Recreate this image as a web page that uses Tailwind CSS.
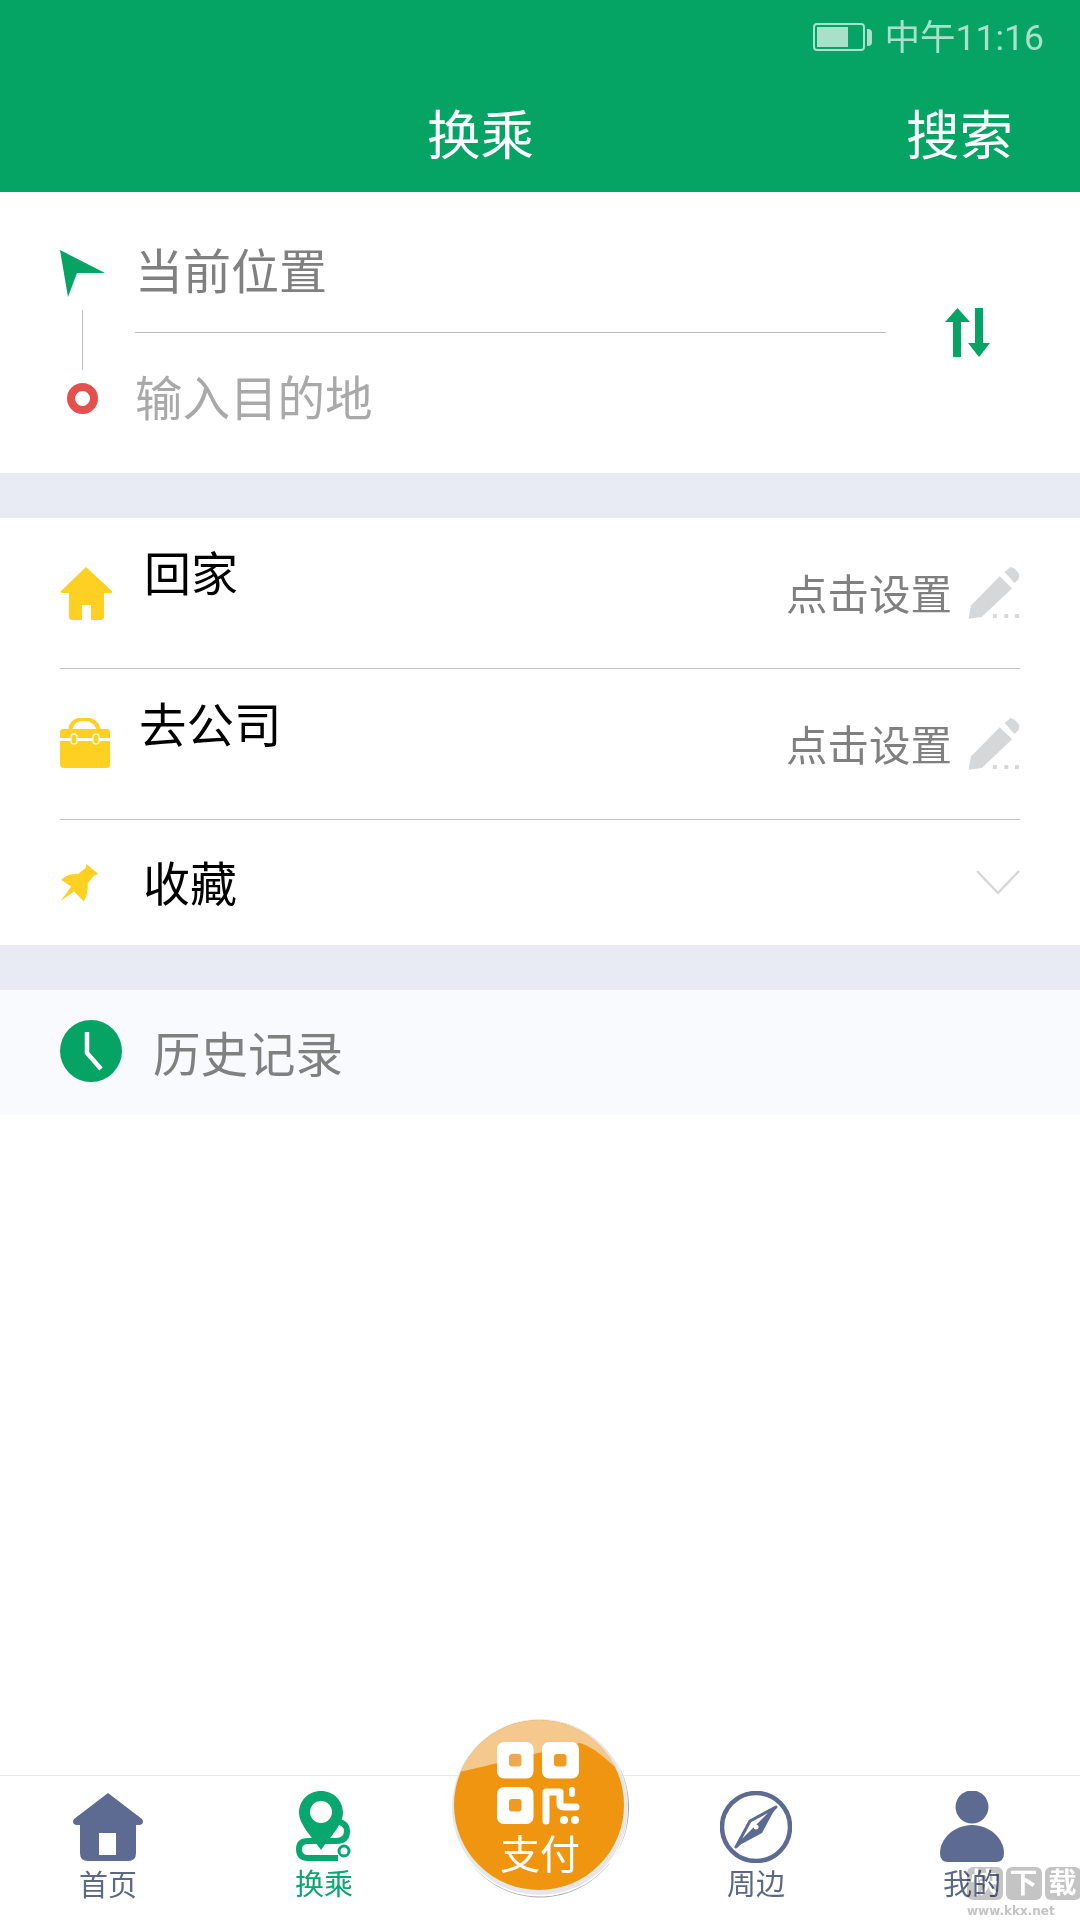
<!DOCTYPE html>
<html lang="zh-CN">
<head>
  <meta charset="UTF-8" />
  <meta name="viewport" content="width=device-width, initial-scale=1.0"/>
  <title>换乘</title>
  <script src="https://cdn.jsdelivr.net/npm/@tailwindcss/browser@4"></script>
</head>
<body class="bg-white font-['Roboto','Noto_Sans_CJK_SC',sans-serif]">
<div class="relative w-[1080px] h-[1920px] flex flex-col overflow-hidden bg-white">

  <!-- header -->
  <header class="h-[192px] bg-[#05a364] shrink-0">
    <div class="h-[72px] flex justify-end items-start pr-[36px] pt-[17px] text-[#a9e0c9]">
      <div class="flex items-center h-[42px] mr-[13px] -mt-px">
        <div class="w-[52px] h-[28px] border-2 border-[#a9e0c9] rounded-[4px] p-[2px]">
          <div class="w-[31px] h-[20px] bg-[#a9e0c9]"></div>
        </div>
        <div class="w-[5px] h-[17px] bg-[#a9e0c9] ml-[2px] rounded-r-sm"></div>
      </div>
      <span class="text-[35.5px] leading-[42px]">中午11:16</span>
    </div>
    <div class="flex justify-between pl-[427px] pr-[67px] pt-[35px] text-white text-[53.5px] leading-[60px]">
      <span>换乘</span>
      <span>搜索</span>
    </div>
  </header>

  <!-- route inputs -->
  <section class="h-[281px] flex pl-[60px] shrink-0">
    <div class="w-[75px] pt-[58px] shrink-0">
      <svg width="46" height="47" viewBox="0 0 46 47"><path d="M0 0 L45 23 L17 23 L8 47 Z" fill="#05a364"/></svg>
      <div class="w-px h-[60px] bg-[#bdbdbd] ml-[22px] mt-[13px]"></div>
      <div class="w-[31px] h-[31px] rounded-full border-[8px] border-[#e5504f] ml-[7px] mt-[13px]"></div>
    </div>
    <div class="w-[751px] shrink-0">
      <div class="h-[141px] border-b border-[#bdbdbd] pt-[57px] text-[48px] leading-[48px] text-[#808080]">当前位置</div>
      <div class="pt-[43px] text-[47.5px] leading-[48px] text-[#a9a9a9]">输入目的地</div>
    </div>
    <svg class="ml-[59px] mt-[116px]" width="45" height="49" viewBox="0 0 45 49">
      <path d="M12.5 0 L25 14 H16 V49 H8 V14 H0 Z" fill="#05a364"/>
      <path d="M30 0 H38 V35 H45 L34 49 L23 35 H30 Z" fill="#05a364"/>
    </svg>
  </section>

  <div class="h-[45px] bg-[#e9ebf4] shrink-0"></div>

  <!-- shortcuts -->
  <section class="px-[60px] shrink-0">
    <div class="h-[151px] flex items-start border-b border-[#c4c4c4]">
      <svg class="mt-[49px] shrink-0" width="53" height="53" viewBox="0 0 53 53"><path d="M26 0 L52 24 Q53 26 50 26 H44 V50 Q44 53 41 53 H31 V38 H22 V53 H12 Q9 53 9 50 V26 H3 Q0 26 1 24 Z" fill="#fdd021"/></svg>
      <span class="ml-[31px] mt-[34px] text-[47px] leading-[46px] text-black">回家</span>
      <span class="ml-auto mt-[57px] text-[41.5px] leading-[42px] text-[#808080]">点击设置</span>
      <svg class="ml-[15px] mt-[48px]" width="53" height="53" viewBox="80 44 162 162">
        <path d="M85 205 L92 165 L180 75 L218 112 L125 200 Z" fill="#d6d7d9"/>
        <path d="M195 62 L213 47 Q228 50 240 70 L237 85 L225 96 Z" fill="#d6d7d9"/>
        <rect x="159" y="191" width="12" height="12" fill="#d6d7d9"/><rect x="194" y="191" width="12" height="12" fill="#d6d7d9"/><rect x="227" y="191" width="12" height="12" fill="#d6d7d9"/>
      </svg>
    </div>
    <div class="h-[151px] flex items-start border-b border-[#c4c4c4]">
      <svg class="mt-[49px] shrink-0" width="50" height="50" viewBox="0 0 50 50">
        <path d="M10 12 Q12 1 24 1 Q36 1 39 12" fill="none" stroke="#fdd021" stroke-width="4"/>
        <path d="M3 11 H47 Q50 11 50 14 V20 H0 V14 Q0 11 3 11 Z" fill="#fdd021"/>
        <path d="M0 23 H50 V46 Q50 50 46 50 H4 Q0 50 0 46 Z" fill="#fdd021"/>
        <rect x="11" y="16" width="6" height="10" rx="3" fill="#fdd021" stroke="#fff5c8" stroke-width="1.5"/>
        <rect x="33" y="16" width="6" height="10" rx="3" fill="#fdd021" stroke="#fff5c8" stroke-width="1.5"/>
      </svg>
      <span class="ml-[31px] -translate-x-[2px] mt-[35px] text-[47.5px] leading-[46px] text-black">去公司</span>
      <span class="ml-auto mt-[57px] text-[41.5px] leading-[42px] text-[#808080]">点击设置</span>
      <svg class="ml-[15px] mt-[48px]" width="53" height="53" viewBox="80 44 162 162">
        <path d="M85 205 L92 165 L180 75 L218 112 L125 200 Z" fill="#d6d7d9"/>
        <path d="M195 62 L213 47 Q228 50 240 70 L237 85 L225 96 Z" fill="#d6d7d9"/>
        <rect x="159" y="191" width="12" height="12" fill="#d6d7d9"/><rect x="194" y="191" width="12" height="12" fill="#d6d7d9"/><rect x="227" y="191" width="12" height="12" fill="#d6d7d9"/>
      </svg>
    </div>
    <div class="h-[125px] flex items-start">
      <svg class="mt-[43px] shrink-0" width="39" height="39" viewBox="0 0 118 116">
        <path d="M80 2 L116 32 L104 36 L84 60 Q86 90 72 115 L42 85 L2 114 L34 70 L3 50 Q25 30 55 32 L78 14 Z" fill="#fdd021"/>
      </svg>
      <span class="ml-[44px] mt-[42px] text-[47px] leading-[46px] text-black">收藏</span>
      <svg class="ml-auto mt-[50px]" width="44" height="25" viewBox="0 0 44 25"><path d="M1 1 L22 23 L43 1" fill="none" stroke="#d6d7d9" stroke-width="2.5"/></svg>
    </div>
  </section>

  <div class="h-[45px] bg-[#e9ebf4] shrink-0"></div>

  <!-- history -->
  <section class="h-[125px] bg-[#f9fafd] flex items-start pl-[60px] shrink-0">
    <svg class="mt-[30px]" width="62" height="62" viewBox="0 0 62 62">
      <circle cx="31" cy="31" r="31" fill="#05a364"/>
      <path d="M27 12 V33 L41 49" fill="none" stroke="#fff" stroke-width="4.5"/>
    </svg>
    <span class="ml-[31px] mt-[42px] text-[47.5px] leading-[48px] text-[#808080]">历史记录</span>
  </section>

  <main class="flex-1"></main>

  <!-- bottom tabs -->
  <nav class="h-[145px] border-t border-[#e8e8e8] grid grid-cols-[216px_216px_216px_216px_216px] shrink-0">
    <div class="flex flex-col items-center pt-[17px]">
      <svg width="72" height="68" viewBox="0 0 72 68">
        <path d="M36 0 L70 26 Q73 31 67 32 H64 V60 Q64 68 56 68 H16 Q8 68 8 60 V32 H5 Q-1 31 2 26 Z" fill="#5d6b92"/>
        <rect x="27" y="40" width="17" height="22" fill="#fff"/>
      </svg>
      <span class="text-[29px] leading-[29px] mt-[11px] text-[#5c6985]">首页</span>
    </div>
    <div class="flex flex-col items-center pt-[15px]">
      <svg width="56" height="71" viewBox="0 0 56 71">
        <path d="M40 30 Q51 32 51 40 Q51 50 40 50 H12 Q3 50 3 58 Q3 67 12 67 H42" fill="none" stroke="#08a770" stroke-width="6"/>
        <circle cx="48" cy="60" r="5" fill="none" stroke="#08a770" stroke-width="3"/>
        <path d="M25 0 C38 0 47 10 47 22 C47 33 35 45 25 59 C15 45 3 33 3 22 C3 10 12 0 25 0 Z" fill="#08a770"/>
        <circle cx="25" cy="21" r="11" fill="#fff"/>
      </svg>
      <span class="text-[29px] leading-[29px] mt-[9px] text-[#08a770]">换乘</span>
    </div>
    <div></div>
    <div class="flex flex-col items-center pt-[15px]">
      <svg width="72" height="72" viewBox="0 0 72 72">
        <circle cx="36" cy="36" r="34" fill="none" stroke="#5d6b92" stroke-width="4.5"/>
        <path d="M56 16 L30 30 L16 56 Z" fill="none" stroke="#5d6b92" stroke-width="3" stroke-linejoin="round"/>
        <path d="M56 16 L42 42 L16 56 L36 36 Z" fill="#5d6b92"/>
        <circle cx="36" cy="36" r="2.5" fill="#fff"/>
      </svg>
      <span class="text-[29px] leading-[29px] mt-[8px] text-[#5c6985]">周边</span>
    </div>
    <div class="flex flex-col items-center pt-[15px]">
      <svg width="64" height="71" viewBox="0 0 64 71">
        <circle cx="32" cy="16" r="16.5" fill="#5d6b92"/>
        <path d="M32 34 C14 34 0 48 0 62 Q0 71 8 71 H56 Q64 71 64 62 C64 48 50 34 32 34 Z" fill="#5d6b92"/>
      </svg>
      <span class="text-[29px] leading-[29px] mt-[9px] text-[#5c6985]">我的</span>
    </div>
  </nav>

  <!-- pay button, sits over the tab bar -->
  <div class="absolute left-[440px] top-[1710px] w-[200px] h-[200px]">
    <svg width="200" height="200" viewBox="0 0 200 200">
      <defs><clipPath id="pay"><circle cx="99" cy="95" r="85"/></clipPath></defs>
      <circle cx="100" cy="97" r="88" fill="#e6e7e9"/>
      <path d="M28 150 A88 88 0 0 0 188 97 A88 88 0 0 0 172 45 A85 85 0 0 1 28 150 Z" fill="#a9abad"/>
      <circle cx="99" cy="95" r="85" fill="#f0950f"/>
      <path d="M10 64 C40 58 110 40 140 33 C155 38 165 48 178 60 L190 0 L10 0 Z" fill="#f5c88d" clip-path="url(#pay)"/>
      <rect x="57" y="32" width="36.5" height="36.5" rx="7" fill="#fff"/><rect x="69" y="44" width="12.5" height="12.5" rx="3" fill="#f0a850"/>
      <rect x="102" y="32" width="37" height="36.5" rx="7" fill="#fff"/><rect x="114" y="44" width="12.5" height="12.5" rx="3" fill="#f09a20"/>
      <rect x="57" y="77" width="36.5" height="37" rx="7" fill="#fff"/><rect x="69" y="89" width="12.5" height="12.5" rx="3" fill="#f09a20"/>
      <path d="M106 111 V82 H120 V94 Q120 97 124 97 H136" fill="none" stroke="#fff" stroke-width="7" stroke-linecap="round" stroke-linejoin="round"/>
      <path d="M132 80 V84" fill="none" stroke="#fff" stroke-width="6" stroke-linecap="round"/>
      <circle cx="124" cy="110" r="4" fill="#fff"/><circle cx="135" cy="110" r="4" fill="#fff"/>
    </svg>
    <span class="absolute left-[60px] top-[124px] text-[40px] leading-[44px] text-white whitespace-nowrap">支付</span>
  </div>

  <!-- site watermark -->
  <div class="absolute left-[967px] top-[1867px] w-[113px] flex flex-col items-center mix-blend-multiply">
    <div class="flex gap-[3px]">
      <span class="w-[36px] h-[33px] bg-[#c4c4c4] rounded-md text-center text-white text-[28px] leading-[33px] font-bold">快</span>
      <span class="w-[36px] h-[33px] bg-[#c4c4c4] rounded-md text-center text-white text-[28px] leading-[33px] font-bold">下</span>
      <span class="w-[36px] h-[33px] bg-[#c4c4c4] rounded-md text-center text-white text-[28px] leading-[33px] font-bold">载</span>
    </div>
    <span class="self-start mt-[3px] text-[12px] leading-[16px] font-bold text-[#c4c4c4] font-['DejaVu_Sans',sans-serif]">www.kkx.net</span>
  </div>
</div>
</body>
</html>
